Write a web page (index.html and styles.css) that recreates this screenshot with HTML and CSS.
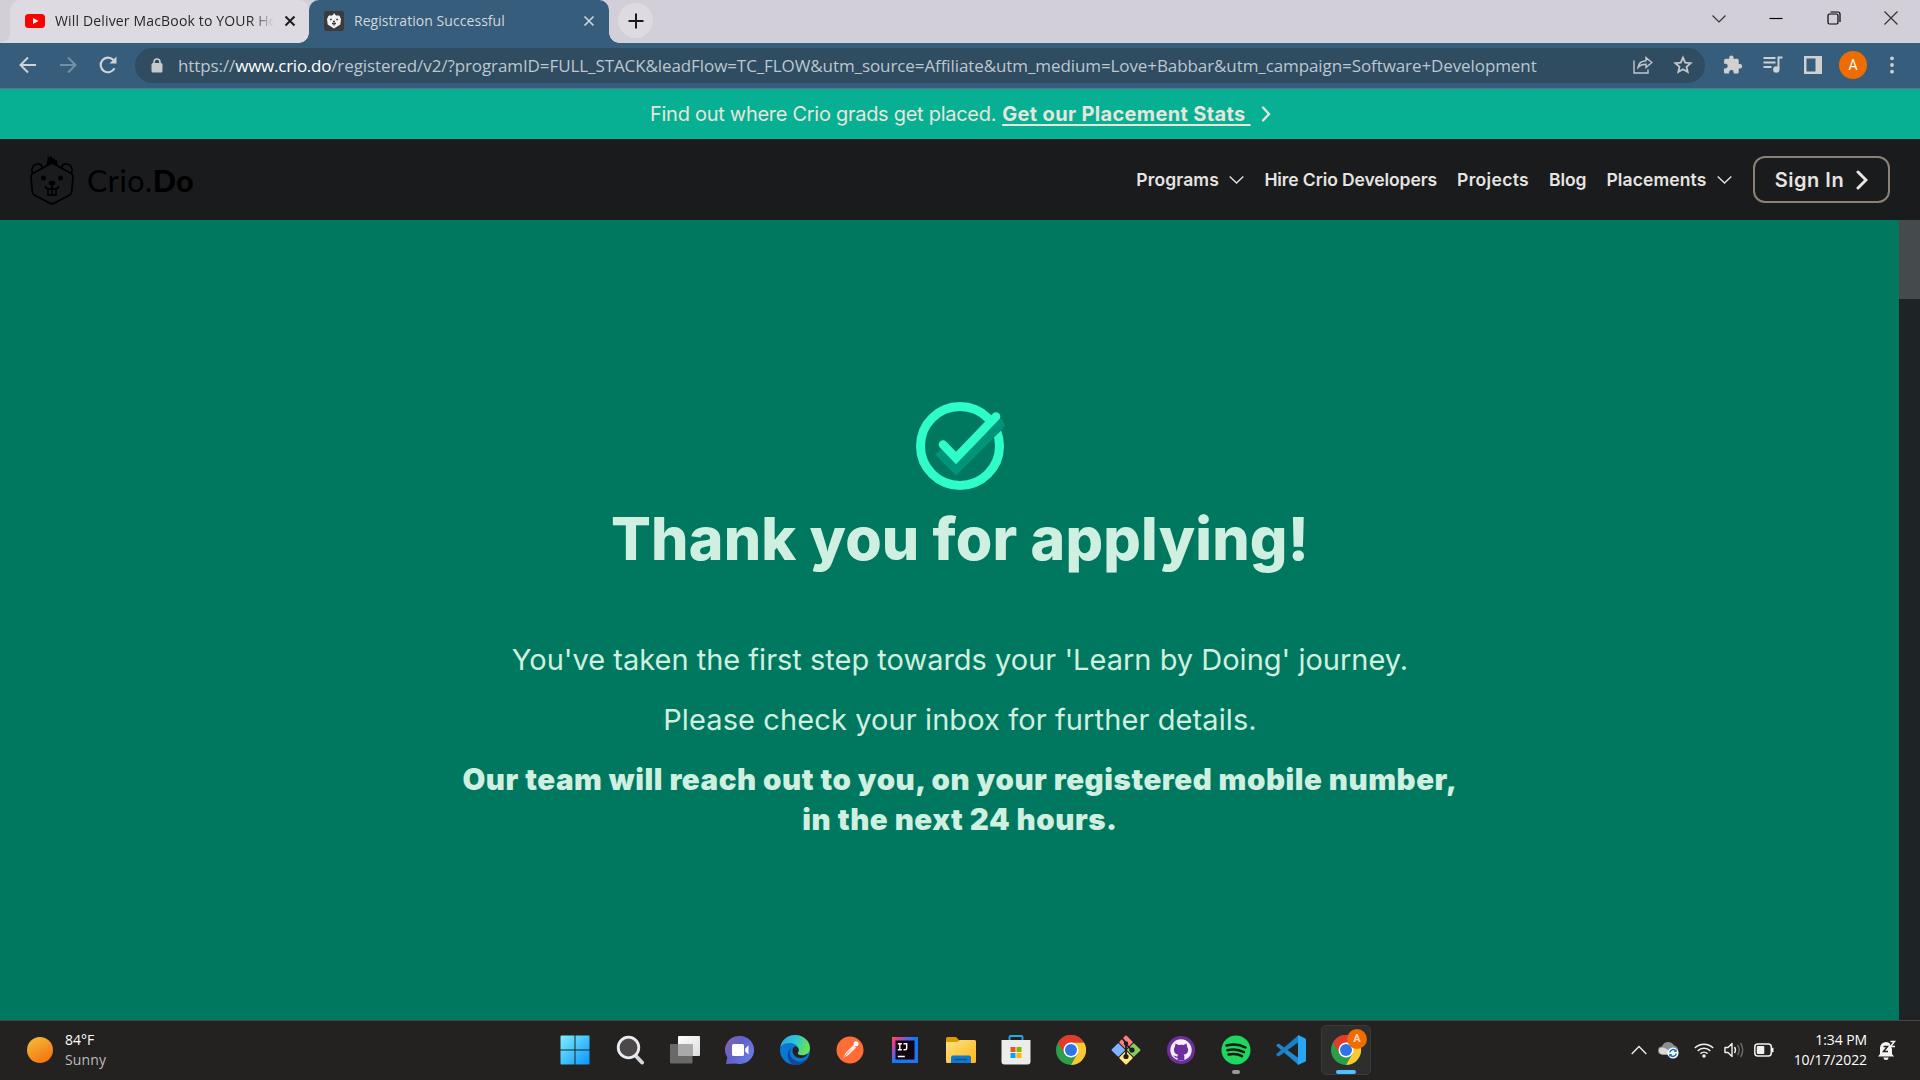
FILE: index.html
```html
<!DOCTYPE html>
<html lang="en">
<head>
<meta charset="utf-8">
<title>Registration Successful</title>
<link rel="stylesheet" href="styles.css">
</head>
<body>
<div class="screen">
  <div class="tabstrip">
    <div class="tab tab-idle">
      <svg class="fav" viewBox="0 0 20 20"><rect y="3" width="20" height="14" rx="3.500" fill="#f00"/><path d="M8 7l5.500 3L8 13z" fill="#fff"/></svg>
      <span class="tab-title tab-fade">Will Deliver MacBook to YOUR Ho</span>
      <svg class="tab-close" viewBox="0 0 12 12"><path d="M1.500 1.500l9 9M10.500 1.500l-9 9" stroke="#1d1d20" stroke-width="2"/></svg>
    </div>
    <div class="tab tab-active">
      <svg class="fav" viewBox="0 0 20 20"><rect width="20" height="20" rx="2.500" fill="#3b3b3d"/><path d="M10 2l1.500 2 1.500.8a2 2 0 0 1 3.200 1.700L17 8l-.7 5.500L10 17.500 3.700 13.500 3 8l.8-1.500A2 2 0 0 1 7 4.800L9 4z" fill="#f2f2f2"/><path d="M6 8.500h1.700M12.300 8.500H14M9 10.500h2M8 12.500h4M10 12.500v2" stroke="#3b3b3d" stroke-width="1.300"/></svg>
      <span class="tab-title">Registration Successful</span>
      <svg class="tab-close" viewBox="0 0 12 12"><path d="M1.500 1.500l9 9M10.500 1.500l-9 9" stroke="#ccd3d9" stroke-width="1.700"/></svg>
    </div>
    <div class="new-tab"><svg width="16" height="16" viewBox="0 0 16 16"><path d="M8 .5v15M.5 8h15" stroke="#19191b" stroke-width="2"/></svg></div>
    <div class="win-controls">
      <svg viewBox="0 0 14 14"><path d="M.5 4.500L7 11l6.500-6.500" fill="none" stroke="#333" stroke-width="1.200"/></svg>
      <svg viewBox="0 0 14 14"><path d="M.5 7.500h13" stroke="#000" stroke-width="1.200"/></svg>
      <svg viewBox="0 0 14 14"><rect x="1" y="3" width="10" height="10" rx="1.500" fill="none" stroke="#000" stroke-width="1.200"/><path d="M3.500 1H11a2 2 0 0 1 2 2v8" fill="none" stroke="#000" stroke-width="1.200"/></svg>
      <svg viewBox="0 0 14 14"><path d="M.5.5l13 13M13.500.5l-13 13" stroke="#333" stroke-width="1.200"/></svg>
    </div>
  </div>

  <div class="toolbar">
    <div class="nav-icons">
      <svg viewBox="0 0 20 20"><path d="M18 10H3M10 2.500L2.500 10l7.500 7.500" fill="none" stroke="#d0d2d4" stroke-width="2"/></svg>
      <svg viewBox="0 0 20 20"><path d="M2 10h15M10 2.500l7.500 7.500-7.500 7.500" fill="none" stroke="#7590a5" stroke-width="2"/></svg>
      <svg viewBox="0 0 20 20"><path d="M16.500 13.200A7.300 7.300 0 1 1 15.200 4.800L17 6.600" fill="none" stroke="#d0d2d4" stroke-width="2.100"/><path d="M18.500 1.500v7h-7z" fill="#d0d2d4"/></svg>
    </div>
    <div class="omnibox">
      <svg class="lock" viewBox="0 0 12 15"><rect x=".5" y="5" width="11" height="9.500" rx="1.500" fill="#c8c9cb"/><path d="M3 6V4a3 3 0 0 1 6 0v2" fill="none" stroke="#c8c9cb" stroke-width="1.600"/></svg>
      <span class="url">https://<b>www.crio.do</b>/registered/v2/?programID=FULL_STACK&amp;leadFlow=TC_FLOW&amp;utm_source=Affiliate&amp;utm_medium=Love+Babbar&amp;utm_campaign=Software+Development</span>
      <svg class="omni-icon" viewBox="0 0 20 20"><path d="M1 5.500V18h14v-3.500M5 12.500c.5-4 3-6.500 8-6.800V2.500l5.800 5-5.800 5V9.300c-3.500 0-6 .9-8 3.200z" fill="none" stroke="#c3c8cc" stroke-width="1.400"/></svg>
      <svg class="omni-icon" viewBox="0 0 20 20"><path d="M10 2.600l2.200 5 5.400.5-4.100 3.600 1.200 5.300-4.700-2.800L5.300 17l1.200-5.300-4.100-3.600 5.400-.5z" fill="none" stroke="#c3c8cc" stroke-width="1.800"/></svg>
    </div>
    <div class="ext-icons">
      <svg viewBox="0 0 20 20"><path d="M17 9h-1.300V5.400c0-.9-.7-1.600-1.600-1.600h-3.500V2.700a2.200 2.200 0 0 0-4.400 0v1.100H2.700c-.9 0-1.600.7-1.600 1.600v3.300h1.300a2.300 2.300 0 0 1 0 4.700H1v3.500c0 .9.700 1.600 1.600 1.600h3.500v-1.300a2.300 2.300 0 0 1 4.600 0v1.300h3.400c.9 0 1.600-.7 1.600-1.600v-3.500H17A2.200 2.200 0 0 0 17 9z" fill="#d0d0d0"/></svg>
      <svg viewBox="0 0 20 20"><path d="M.5 3h12M.5 7.500h12M.5 12h8" stroke="#d0d0d0" stroke-width="2"/><path d="M15.500 14V2.500h4" fill="none" stroke="#d0d0d0" stroke-width="2"/><circle cx="13.300" cy="14.500" r="3.200" fill="#d0d0d0"/></svg>
      <svg viewBox="0 0 20 20"><path d="M1 1h18v18H1zM3.500 3.500v13h9v-13z" fill="#d0d0d0" fill-rule="evenodd"/></svg>
      <span class="avatar">A</span>
      <svg class="dots" viewBox="0 0 20 20"><circle cx="10" cy="3.300" r="1.900" fill="#d0d0d0"/><circle cx="10" cy="10" r="1.900" fill="#d0d0d0"/><circle cx="10" cy="16.700" r="1.900" fill="#d0d0d0"/></svg>
    </div>
  </div>

  <div class="banner">
    <span class="banner-text">Find out where Crio grads get placed.</span>
    <span class="banner-link">Get our Placement Stats&nbsp;</span>
    <svg width="10" height="16" viewBox="0 0 10 16"><path d="M2 1.500L8 8l-6 6.500" fill="none" stroke="#e6e6de" stroke-width="2.300" stroke-linecap="round"/></svg>
  </div>

  <header class="site-header">
    <div class="brand">
      <svg width="44" height="50" viewBox="0 0 44 50" fill="none" stroke="#000" stroke-width="1.700" stroke-linejoin="round"><path d="M22 8L41.500 18.500c1.200 1 1.500 2 1.500 3.500l-1.300 15c-.2 1.500-.7 2.300-2 3L24 48.200c-1.400.8-2.600.8-4 0L4.300 40c-1.300-.7-1.800-1.500-2-3L1 22c0-1.500.3-2.500 1.500-3.500z"/><path d="M2.500 18C1 13 3 9.500 7 9c3-.3 4.500 1 5.500 3.500M41.500 18C43 13 41 9.500 37 9c-3-.3-4.500 1-5.500 3.500"/><path d="M16.500 10.500C17 6 18 4 17.500 1l3 2L20 0l3.500 4 1-1.500.5 3 2-.5c0 3 .5 4 1 5.500L22 8z" fill="#000" stroke="none"/><circle cx="13.500" cy="23" r="2.500" fill="#000" stroke="none"/><circle cx="30.500" cy="23" r="2.500" fill="#000" stroke="none"/><ellipse cx="22" cy="28" rx="3.300" ry="2.200" fill="#000" stroke="none"/><path d="M22 28v5.500M15.500 31c0 2 1 2.800 3 2.800h7c2 0 3-.8 3-2.800M18 34v6h8v-6M22 34v6"/></svg>
      <span class="brand-name">Crio.<b>Do</b></span>
    </div>
    <nav class="menu">
      <span class="drop">Programs <svg width="15" height="10" viewBox="0 0 15 10"><path d="M.7 1.500l6.800 6.500 6.800-6.500" fill="none" stroke="#e4e2de" stroke-width="1.400"/></svg></span>
      <span class="hire">Hire Crio Developers</span>
      <span class="projects">Projects</span>
      <span>Blog</span>
      <span class="drop">Placements <svg width="15" height="10" viewBox="0 0 15 10"><path d="M.7 1.500l6.800 6.500 6.800-6.500" fill="none" stroke="#e4e2de" stroke-width="1.400"/></svg></span>
      <span class="signin">Sign In <svg width="12" height="20" viewBox="0 0 12 20"><path d="M2 2l8 8-8 8" fill="none" stroke="#e8e6e3" stroke-width="3" stroke-linecap="round"/></svg></span>
    </nav>
  </header>

  <div class="viewport">
    <main class="hero">
      <svg class="check" width="90" height="90" viewBox="0 0 90 90"><circle cx="45" cy="45" r="39.500" fill="none" stroke="#2efcc9" stroke-width="9"/><path d="M28 55l13 12.500L85 24" fill="none" stroke="#00957a" stroke-width="9" stroke-linecap="round"/><path d="M26 49l2-5.500 13 13L81.500 15l6 4v9L41 74.500 20 53z" fill="#00957a"/><path d="M28 43.500L41 57 81 15.500" fill="none" stroke="#2efcc9" stroke-width="8.600" stroke-linecap="round"/></svg>
      <h1>Thank you for applying!</h1>
      <p class="line1">You've taken the first step towards your 'Learn by Doing' journey.</p>
      <p class="line2">Please check your inbox for further details.</p>
      <p class="line3">Our team will reach out to you, on your registered mobile number,<br><span class="tail">in the next 24 hours.</span></p>
    </main>
    <div class="scrollbar"><div class="thumb"></div></div>
  </div>

  <div class="taskbar">
    <div class="weather">
      <span class="sun"></span>
      <span class="weather-text"><span>84°F</span><span class="dim">Sunny</span></span>
    </div>
    <div class="apps">
      <span class="app"><svg viewBox="0 0 30 30"><defs><linearGradient id="win" x1="0" y1="0" x2="1" y2="1"><stop offset="0" stop-color="#7df0ff"/><stop offset="1" stop-color="#0a95fb"/></linearGradient></defs><path d="M1.500.5h13v14h-14v-13a1 1 0 0 1 1-1zM15.500.5h13a1 1 0 0 1 1 1v13h-14zM.5 15.500h14v14h-13a1 1 0 0 1-1-1zM15.500 15.500h14v13a1 1 0 0 1-1 1h-13z" fill="url(#win)"/></svg></span>
      <span class="app"><svg viewBox="0 0 30 30"><path d="M20 20l7 7.500" stroke="#d5d8dd" stroke-width="4" stroke-linecap="round"/><circle cx="13.500" cy="12.500" r="10.300" fill="#4b494a" stroke="#e9ebee" stroke-width="2.800"/></svg></span>
      <span class="app"><svg viewBox="0 0 30 30"><defs><linearGradient id="tv" x1="0" y1="0" x2="1" y2="1"><stop offset="0" stop-color="#fff"/><stop offset="1" stop-color="#dcdcdc"/></linearGradient></defs><rect x="8" y="1" width="22" height="20" rx="1" fill="url(#tv)"/><rect x="0" y="9" width="22.500" height="19.500" rx="1" fill="#696969"/><path d="M8 9h14.500v12H8z" fill="#a9a9a9"/></svg></span>
      <span class="app"><svg viewBox="0 0 30 30"><defs><linearGradient id="chat" x1="0" y1="0" x2="1" y2=".6"><stop offset="0" stop-color="#8b65a8"/><stop offset=".5" stop-color="#6261cb"/><stop offset="1" stop-color="#667be6"/></linearGradient></defs><path d="M15 1a14 14 0 1 1-4 27.400L1 29l1.300-6.500A14 14 0 0 1 15 1z" fill="url(#chat)"/><rect x="7" y="9" width="12" height="12" rx="1.500" fill="#fff"/><path d="M20.200 13.500l3.300-3v9l-3.300-3z" fill="#fff"/></svg></span>
      <span class="app"><svg viewBox="0 0 30 30"><defs><linearGradient id="ed1" x1="0" y1="0" x2="1" y2=".3"><stop offset="0" stop-color="#25a6e2"/><stop offset=".55" stop-color="#31c5d4"/><stop offset="1" stop-color="#65e354"/></linearGradient></defs><circle cx="15" cy="15" r="15" fill="#0b78d0"/><path d="M.3 12C1.500 5 7.500 0 15 0c8.500 0 15 6 15 13 0 5-4 7.500-8 7.500-3.500 0-5-1.300-4.200-2.700 1.600-2.300.8-6.300-2.600-8.300C10 6.700 3.500 8 .3 12z" fill="url(#ed1)"/><path d="M12 12.500c-2.500 2.500-3 7 0 10.500 4 4.500 11 4.500 16 0C25 28 19 31 14 30 7 28 5 16 12 12.500z" fill="#12489b"/><path d="M14.500 11.500c2.500-.5 4.800 1.500 4.200 4.500-.4 1.500-1.500 2-.7 3 1.500 1.700 6.500 2 9.500-.5-.5 3-4 5-8 4.500-7-.8-9-9-5-11.500z" fill="#232221"/></svg></span>
      <span class="app"><svg viewBox="0 0 30 30"><circle cx="15" cy="15" r="13.500" fill="#ff6c37"/><circle cx="21" cy="8.800" r="2.500" fill="#fff"/><path d="M18.500 10l2.700 2.500-7.700 7.500-5.500 3 2.500-5z" fill="#ffe9e1"/><path d="M15 15.500l-6.500 7" stroke="#ff6c37" stroke-width=".8"/></svg></span>
      <span class="app"><svg viewBox="0 0 30 30"><defs><linearGradient id="ij" x1="0" y1="0" x2="1" y2=".8"><stop offset="0" stop-color="#fc5a3a"/><stop offset=".15" stop-color="#e83b8c"/><stop offset=".35" stop-color="#7c59d8"/><stop offset=".55" stop-color="#087cfa"/><stop offset="1" stop-color="#2a6ff0"/></linearGradient></defs><rect x="2" y="2" width="26" height="26" fill="url(#ij)"/><rect x="5.500" y="5.500" width="19" height="19" fill="#120512"/><path d="M7.800 8.700h4M9.800 8.700v6M7.800 14.700h4M13.500 8.700h3.200v4.500q0 1.500-1.700 1.500h-1.500M7.800 21.500h7" fill="none" stroke="#fff" stroke-width="1.400"/></svg></span>
      <span class="app"><svg viewBox="0 0 30 30"><defs><linearGradient id="fold" x1="0" y1="0" x2="1" y2="1"><stop offset="0" stop-color="#ffe083"/><stop offset="1" stop-color="#fdb916"/></linearGradient></defs><path d="M0 3.500a1.500 1.500 0 0 1 1.500-1.500H10l3 3h15v10H0z" fill="#dc9a00"/><path d="M0 7h11l3-2h14.500A1.500 1.500 0 0 1 30 6.500v20a1.500 1.500 0 0 1-1.500 1.500h-27A1.500 1.500 0 0 1 0 26.500z" fill="url(#fold)"/><path d="M5 28v-5.500a2 2 0 0 1 2-2h16a2 2 0 0 1 2 2V28z" fill="#0f78cf"/><path d="M9 24.500h12" stroke="#0a4f94" stroke-width="1.300"/></svg></span>
      <span class="app"><svg viewBox="0 0 30 30"><path d="M8.500 6V2a1 1 0 0 1 1-1h11a1 1 0 0 1 1 1v4" fill="none" stroke="#27a9ec" stroke-width="1.800"/><path d="M.5 5h29v21.500a3 3 0 0 1-3 3h-23a3 3 0 0 1-3-3z" fill="#ececec"/><path d="M9.500 12h5v5h-5z" fill="#f25022"/><path d="M15.500 12h5v5h-5z" fill="#7fba00"/><path d="M9.500 18h5v5h-5z" fill="#00a4ef"/><path d="M15.500 18h5v5h-5z" fill="#ffb900"/></svg></span>
      <span class="app"><svg viewBox="0 0 30 30"><g id="chrome"><circle cx="15" cy="15" r="15" fill="#2b9e4b"/><path d="M15 7.500h13A15 15 0 0 1 15 30l6.500-11.200z" fill="#fcc934"/><path d="M28 7.500A15 15 0 0 0 2 7.500L8.500 18.700 15 7.500z" fill="#e33b2e"/><circle cx="15" cy="15" r="7.500" fill="#fff"/><circle cx="15" cy="15" r="6" fill="#2e74e8"/></g></svg></span>
      <span class="app"><svg viewBox="0 0 30 30"><g transform="rotate(45 15 15)"><rect x="4.500" y="4.500" width="10" height="10" rx="1" fill="#ff8080"/><rect x="15.500" y="4.500" width="10" height="10" rx="1" fill="#87cc5f"/><rect x="4.500" y="15.500" width="10" height="10" rx="1" fill="#80b3ff"/><rect x="15.500" y="15.500" width="10" height="10" rx="1" fill="#ffe680"/></g><path d="M11 3l4 5v13M15 9l5.500 6" fill="none" stroke="#201c1c" stroke-width="1.800"/><circle cx="15" cy="8.500" r="2.200" fill="#201c1c"/><circle cx="21" cy="15" r="2.600" fill="#201c1c"/><circle cx="15" cy="21.500" r="2.600" fill="#201c1c"/></svg></span>
      <span class="app"><svg viewBox="0 0 30 30"><circle cx="15" cy="15" r="14" fill="#6e2f9e"/><circle cx="15" cy="15" r="10.700" fill="#f4eff8"/><path d="M9.500 8.500l3 1.500q2.500-.5 5 0l3-1.500.6 3.200q1.300 1.500 1 3.500c-.3 3-2 4-4.300 4.400.7 1 .6 2 .6 5.900h-6.800v-2.700c-2.600.4-3-1.200-4.300-2.300 1.700-.2 2 1.400 4.200.9 0-.8.200-1.300.7-1.800-2.300-.4-4-1.500-4.300-4.400q-.2-2 1-3.500z" fill="#6e2f9e"/></svg></span>
      <span class="app"><svg viewBox="0 0 30 30"><circle cx="15" cy="15" r="14.500" fill="#1ed760"/><path d="M5.500 10.500c6-1.700 13.500-1.100 19 2M6.500 15.200c5.500-1.400 11.500-.8 16.500 2M7.500 19.500c4.500-1 9.500-.6 13.500 1.600" fill="none" stroke="#10180f" stroke-width="2.500" stroke-linecap="round"/></svg><i class="dot"></i></span>
      <span class="app"><svg viewBox="0 0 30 30"><path d="M0 10.500l2.500-2 20 14.500V30z" fill="#2189d0"/><path d="M0 19.500l2.500 2L22.500 7V0z" fill="#0f6dad"/><path d="M0 19.500l2.500 2 20-14.500V.5z" fill="#1b7fc6"/><path d="M22 0l7 3.200q1 .5 1 1.500v20.600q0 1-1 1.500L22 30z" fill="#2aa7f2"/></svg></span>
      <span class="app app-active"><svg viewBox="0 0 30 30"><use href="#chrome"/></svg><b class="badge">A</b><i class="pill"></i></span>
    </div>
    <div class="tray">
      <svg class="t-chev" viewBox="0 0 16 10"><path d="M.7 9L8 1.500 15.300 9" fill="none" stroke="#eee" stroke-width="1.400"/></svg>
      <svg class="t-cloud" viewBox="0 0 22 18"><path d="M4 13.500a4 4 0 0 1 0-8A6.500 6.500 0 0 1 16 4.500a5 5 0 0 1 2 9z" fill="#8e8e8e"/><path d="M4 13.500A4 4 0 0 1 2 7c3-1.500 6 0 9 3l2 3.500z" fill="#d8d8d8"/><circle cx="15" cy="12" r="5.600" fill="#fff"/><path d="M11.800 11.500a3.300 3.300 0 0 1 6-1.500M18.200 12.500a3.300 3.300 0 0 1-6 1.500" fill="none" stroke="#1070c8" stroke-width="1.500"/><path d="M18.700 8v3h-3zM11.300 16v-3h3z" fill="#1070c8"/></svg>
      <svg class="t-wifi" viewBox="0 0 20 16"><path d="M.8 6a13 13 0 0 1 18.400 0M3.700 8.900a9 9 0 0 1 12.600 0M6.500 11.600a5 5 0 0 1 7 0" fill="none" stroke="#f2f2f2" stroke-width="1.500"/><circle cx="10" cy="14" r="1.700" fill="#f2f2f2"/></svg>
      <svg class="t-vol" viewBox="0 0 20 16"><path d="M1 5.500h3L8 1.500v13l-4-4H1z" fill="none" stroke="#f2f2f2" stroke-width="1.400" stroke-linejoin="round"/><path d="M10.500 5q2 3 0 6" fill="none" stroke="#f2f2f2" stroke-width="1.400"/><path d="M13.500 3q3.500 5 0 10M16.500 1q4.500 7 0 14" fill="none" stroke="#6b6b6b" stroke-width="1.400"/></svg>
      <svg class="t-bat" viewBox="0 0 20 14"><rect x=".8" y="1" width="16.500" height="12" rx="3" fill="none" stroke="#f2f2f2" stroke-width="1.500"/><rect x="2.800" y="3" width="7.500" height="8" rx="1" fill="#f2f2f2"/><path d="M18.500 4.800v4.400" stroke="#f2f2f2" stroke-width="2"/></svg>
      <span class="clock"><span>1:34 PM</span><span>10/17/2022</span></span>
      <svg class="t-bell" viewBox="0 0 18 20"><path d="M2 14V8a6 6 0 0 1 12 0v6l2 2.500H0zM5.500 17.500h5a2.500 2.500 0 0 1-5 0z" fill="#f4f4f4"/><path d="M5.500 6.500h4l-4 5h4.500" fill="none" stroke="#232221" stroke-width="1.500"/><path d="M10.500 0H18v9h-4z" fill="#232221"/><path d="M12.500 1.500h4l-4 5h4.500" fill="none" stroke="#f4f4f4" stroke-width="1.500"/></svg>
    </div>
  </div>
</div>
</body>
</html>
```
FILE: styles.css
```css
* { box-sizing: border-box; }
body { margin: 0; background: #232221; }
svg { display: block; flex: none; }
span { white-space: nowrap; }
.screen { width: 1920px; height: 1080px; display: flex; flex-direction: column; overflow: hidden; font-family: "Inter", sans-serif; }

/* Browser tab strip */
.tabstrip { height: 43px; flex: none; background: #d2cfd8; display: flex; padding-left: 10px; font-family: "Open Sans", "Noto Sans", sans-serif; font-size: 14px; letter-spacing: .05px; }
.tab { position: relative; height: 43px; display: flex; align-items: center; padding-bottom: 2px; border-radius: 10px 10px 0 0; }
.tab-idle { width: 299px; padding-left: 15px; background: #dddbe1; color: #27272a; }
.tab-active { width: 300px; padding-left: 15px; background: #365d7b; color: #d0d7dd; }
.tab::before, .tab-active::after { content: ""; position: absolute; bottom: 0; width: 10px; height: 10px; }
.tab::before { left: -10px; background: radial-gradient(circle at 0 0, transparent 9.5px, #dddbe1 10px); }
.tab-active::before { background: radial-gradient(circle at 0 0, transparent 9.5px, #365d7b 10px); }
.tab-active::after { right: -10px; background: radial-gradient(circle at 100% 0, transparent 9.5px, #365d7b 10px); }
.fav { width: 20px; height: 20px; margin-right: 10px; }
.tab-title { width: 219px; }
.tab-idle .tab-title { letter-spacing: .16px; }
.tab-active .tab-title { width: 229px; }
.tab-fade { -webkit-mask-image: linear-gradient(90deg, #000 196px, transparent 219px); mask-image: linear-gradient(90deg, #000 196px, transparent 219px); }
.tab-close { width: 12px; height: 12px; }
.tab-idle .tab-close { margin-left: 10px; }
.new-tab { width: 35px; height: 35px; margin: 3px 0 0 9px; border-radius: 50%; background: #dddbe1; display: grid; place-items: center; }
.win-controls { margin-left: auto; display: flex; gap: 43.500px; padding: 11px 22px 0 0; }
.win-controls svg { width: 14px; height: 14px; }

/* Address bar row */
.toolbar { height: 46px; flex: none; background: #365d7b; border-bottom: 1px solid #5b7188; display: flex; align-items: center; padding-bottom: 1px; }
.nav-icons { display: flex; gap: 20px; padding-left: 18px; width: 135px; }
.nav-icons svg { width: 20px; height: 20px; }
.omnibox { width: 1570px; height: 35px; border-radius: 18px; background: #304c61; display: flex; align-items: center; padding: 0 12px 0 16px; }
.lock { width: 12px; height: 15px; margin-right: 15px; }
.url { flex: 1; font-family: "Open Sans", "Noto Sans", sans-serif; font-size: 17px; letter-spacing: -.09px; color: #bcc7cf; }
.url b { font-weight: 400; letter-spacing: -.25px; color: #fff; }
.omni-icon { width: 20px; height: 20px; margin-left: 20px; }
.ext-icons { display: flex; align-items: center; gap: 20px; padding-left: 18px; }
.ext-icons svg { width: 20px; height: 20px; }
.avatar { width: 28px; height: 28px; margin: 0 -1px 0 -4px; border-radius: 50%; background: #ef6c00; color: #fff; font: 14px/28px "Roboto", sans-serif; text-align: center; }
.ext-icons .dots { margin-left: -4px; }

/* Placement banner */
.banner { height: 50px; flex: none; background: #07b092; color: #e6e6de; display: flex; align-items: center; padding-left: 650px; font-size: 20px; }
.banner-text { letter-spacing: -.28px; margin-right: 6px; }
.banner-link { font-weight: 700; letter-spacing: .34px; text-decoration: underline; text-decoration-thickness: 2px; text-underline-offset: 3px; margin-right: 10px; }

/* Site header */
.site-header { height: 81px; flex: none; background: #1a1b1d; display: flex; align-items: center; justify-content: space-between; padding: 0 30px; }
.brand { display: flex; align-items: center; gap: 13px; }
.brand-name { font: 400 30.500px/40px "Lato", sans-serif; letter-spacing: .5px; color: #000; }
.brand-name b { font-weight: 900; letter-spacing: .3px; }
.menu { display: flex; align-items: center; gap: 20px; font-size: 17.500px; font-weight: 600; letter-spacing: -.1px; color: #e6e4e1; }
.drop { display: flex; align-items: center; gap: 10.500px; letter-spacing: .12px; }
.projects { letter-spacing: .34px; }
.signin { width: 137px; height: 47px; margin-left: 1px; border: 2px solid #8c8273; border-radius: 12px; display: flex; align-items: center; justify-content: center; gap: 12px; font-size: 20px; letter-spacing: .5px; }

/* Confirmation panel */
.viewport { flex: 1; display: flex; }
.hero { flex: 1; background: #00785f; color: #cff0e0; text-align: center; display: flex; flex-direction: column; align-items: center; padding: 181px 0 0 21px; }
h1 { margin: 18px 0 0; font-size: 59px; line-height: 60px; font-weight: 800; letter-spacing: .17px; }
.hero p { margin: 0 0 20px; font-size: 29px; line-height: 40px; }
.hero .line1 { margin-top: 71px; }
.hero .line2 { letter-spacing: .1px; }
.hero .line3 { margin-top: -1px; font-weight: 900; font-size: 29.500px; letter-spacing: .53px; }
.scrollbar { width: 21px; background: #202325; }
.thumb { height: 79px; background: #454a4d; }

/* Taskbar */
.taskbar { height: 60px; flex: none; background: #232221; border-top: 1px solid #464645; padding-bottom: 2px; display: grid; grid-template-columns: 1fr auto 1fr; align-items: center; color: #fff; font-family: "Open Sans", "Noto Sans", sans-serif; font-size: 14px; }
.weather { display: flex; align-items: center; gap: 12px; padding-left: 27px; }
.sun { width: 26px; height: 26px; border-radius: 50%; background: linear-gradient(150deg, #f4c23a, #f59021 55%, #ee6a10); }
.weather-text, .clock { display: flex; flex-direction: column; line-height: 20px; }
.dim { color: #bcbcbc; letter-spacing: .15px; }
.apps { display: flex; gap: 5.050px; padding-left: 1px; }
.app { position: relative; width: 50px; height: 50px; display: grid; place-items: center; border-radius: 5px; }
.app svg { width: 30px; height: 30px; }
.app-active { background: #2f2e2e; border: 1px solid #3b3a3a; }
.dot, .pill { position: absolute; bottom: 1px; left: 50%; transform: translateX(-50%); height: 4px; border-radius: 2px; }
.dot { width: 8px; background: #9a9898; }
.pill { width: 20px; bottom: 0; background: #4cc2ff; }
.badge { position: absolute; top: 3px; right: 3px; width: 20px; height: 20px; border-radius: 50%; background: #ef6c00; color: #ffd9b8; font: 700 11px/20px "Roboto", sans-serif; text-align: center; }
.tray { display: flex; align-items: center; justify-content: flex-end; padding-right: 24px; }
.t-chev { width: 16px; height: 10px; margin-right: 11px; }
.t-cloud { width: 22px; height: 18px; margin-right: 14px; }
.t-wifi { width: 20px; height: 16px; margin-right: 10px; }
.t-vol { width: 20px; height: 16px; margin-right: 10px; }
.t-bat { width: 20px; height: 14px; margin-right: 20px; }
.clock { text-align: right; letter-spacing: -.1px; margin-right: 11px; }
.t-bell { width: 18px; height: 20px; }
```
